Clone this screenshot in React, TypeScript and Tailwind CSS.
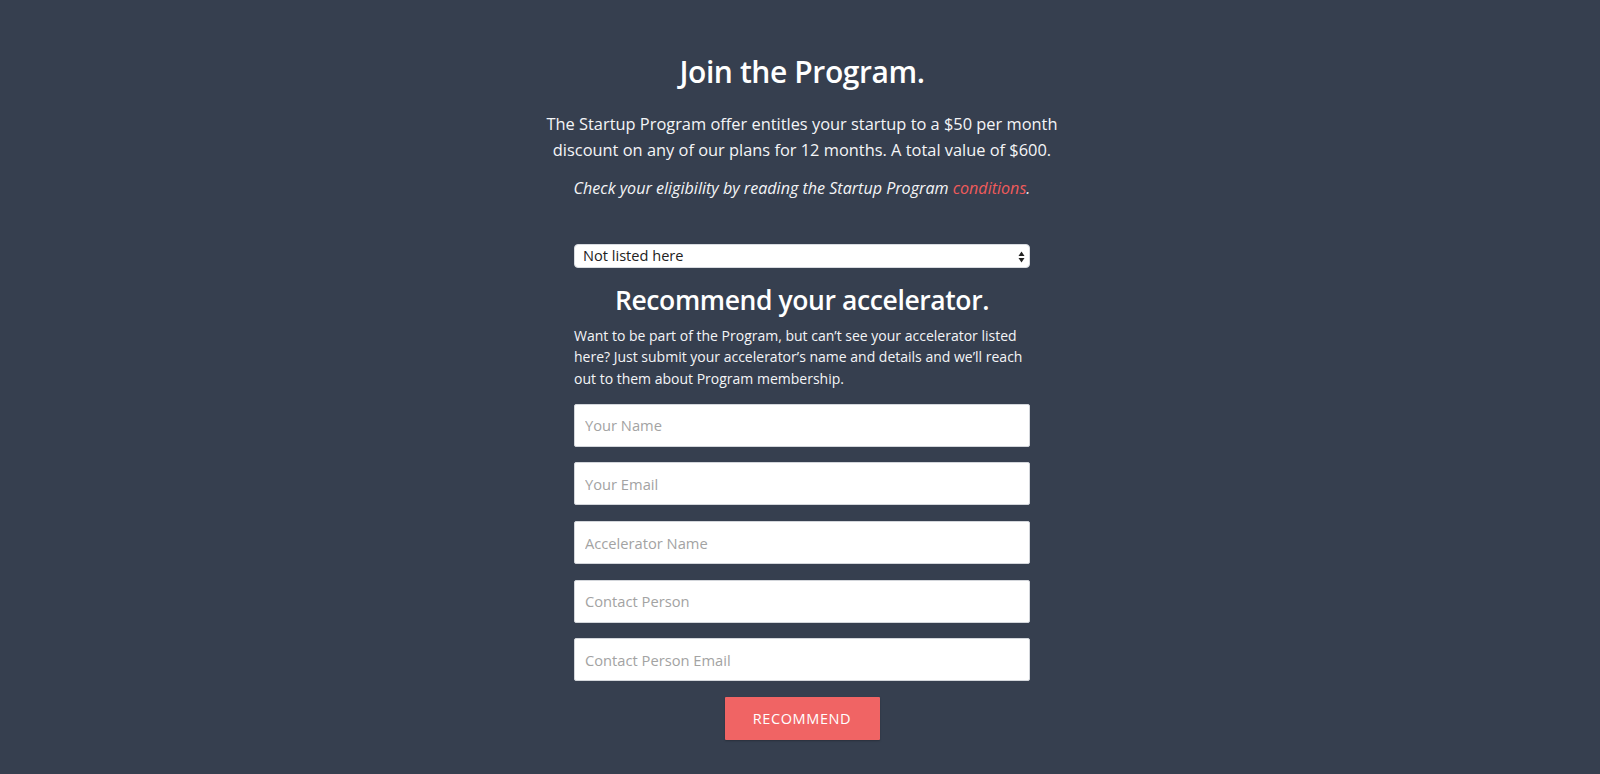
import React from "react";

const FIELDS = [
  "Your Name",
  "Your Email",
  "Accelerator Name",
  "Contact Person",
  "Contact Person Email",
];

export default function App() {
  return (
    <div
      className="min-h-[774px] w-full bg-[#363f4f] pl-1 text-white"
      style={{ fontFamily: '"Open Sans", "Liberation Sans", sans-serif' }}
    >
      <div className="mx-auto flex w-[560px] flex-col items-center pt-[52px] pb-[33px]">
        <h1 className="text-[30px] font-semibold leading-[40px] tracking-[-0.4px]">
          Join the Program.
        </h1>
        <p className="mt-[19px] whitespace-nowrap text-center text-[16.4px] leading-[25.5px] text-[#f4f5f7]">
          The Startup Program offer entitles your startup to a $50 per month
          <br />
          discount on any of our plans for 12 months. A total value of $600.
        </p>
        <p className="mt-[13.5px] whitespace-nowrap text-center text-[16.1px] italic leading-[25.5px] text-[#f4f5f7]">
          Check your eligibility by reading the Startup Program{" "}
          <a href="#" className="text-[#f05b5b]">
            conditions
          </a>
          .
        </p>

        <div className="mt-[43px] flex w-[456px] flex-col">
          {/* accelerator select */}
          <div className="relative flex h-[24px] items-center rounded-[4px] border border-[#d8dbe0] bg-white pl-[8px] text-[14.6px] text-[#222]">
            <span>Not listed here</span>
            <svg
              className="absolute right-[4px] top-[6px]"
              width="7"
              height="12"
              viewBox="0 0 7 12"
            >
              <path d="M3.5 0.5 L6.5 5 L0.5 5 Z" fill="#222" />
              <path d="M3.5 11.5 L6.5 7 L0.5 7 Z" fill="#222" />
            </svg>
          </div>

          <h2 className="mt-[14px] text-center text-[26.5px] font-semibold leading-[36px] tracking-[-0.4px]">
            Recommend your accelerator.
          </h2>
          <p className="mt-[7px] text-[14px] leading-[21.4px] text-[#f4f5f7]">
            Want to be part of the Program, but can’t see your accelerator listed
            here? Just submit your accelerator’s name and details and we’ll reach
            out to them about Program membership.
          </p>

          <form className="mt-[14.5px] flex flex-col gap-[15.7px]">
            {FIELDS.map((f) => (
              <input
                key={f}
                type="text"
                placeholder={f}
                className="h-[43px] w-full rounded-[2px] border border-[#d3d6db] bg-white px-[10px] text-[14.7px] text-[#333] placeholder:text-[#a3a3a3] outline-none"
              />
            ))}
            <div className="flex justify-center">
              <button
                type="button"
                className="h-[43px] w-[155px] rounded-[1px] bg-[#f06464] text-[14.5px] tracking-[0.6px] text-white shadow-[0_1px_2px_rgba(0,0,0,0.25)]"
              >
                RECOMMEND
              </button>
            </div>
          </form>
        </div>
      </div>
    </div>
  );
}
